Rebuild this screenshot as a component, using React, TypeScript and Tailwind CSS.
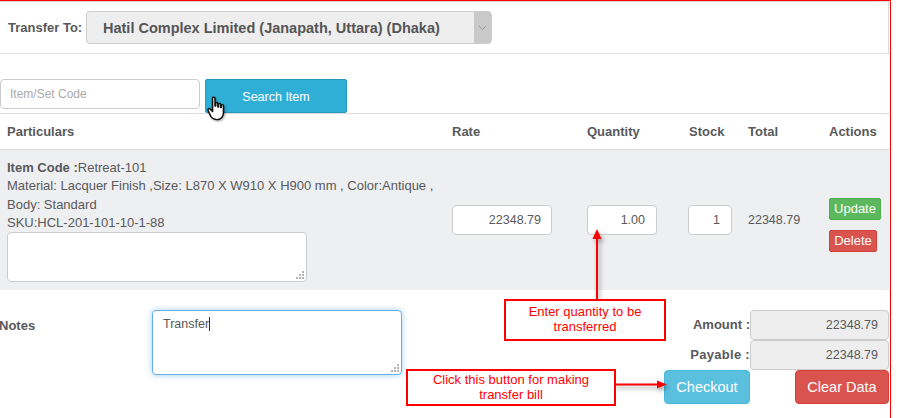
export default function App() {
  const font = { fontFamily: '"Liberation Sans", Arial, sans-serif' };
  return (
    <div style={font} className="relative w-[897px] h-[418px] overflow-hidden bg-white text-[12.5px] text-[#58595b]">
      <div className="w-[891px] h-[418px] border-t border-r border-[#ff0000]">
        <div className="w-[889px]">
          <div className="flex items-center h-[53px] border-t border-r border-b border-[#dddddd] pl-2">
            <span className="w-[78px] text-[13px] font-bold">Transfer To:</span>
            <div className="flex w-[406px] h-[33px] rounded border border-[#cccccc] bg-[#eeeeee] overflow-hidden">
              <span className="flex-1 pl-4 leading-[32px] text-[14.5px] font-bold text-[#555555]">Hatil Complex Limited (Janapath, Uttara) (Dhaka)</span>
              <span className="flex w-[17px] items-center justify-center bg-[#c9c9c9]">
                <svg width="9" height="6" viewBox="0 0 9 6" fill="none" stroke="#999999"><path d="M1 1l3.5 3.5L8 1" /></svg>
              </span>
            </div>
          </div>
          <div className="flex items-start gap-[5px] h-[60px] pt-[25px] border-b border-[#dddddd]">
            <div className="w-[200px] h-[30px] rounded border border-[#cccccc] bg-white pl-[9px] text-[12px] leading-[28px] text-[#aaaaaa]">Item/Set Code</div>
            <div className="w-[142px] h-[34px] rounded-[2px] border border-[#269abc] bg-[#2fafd6] text-center leading-[34px] text-white">Search Item</div>
          </div>
          <div className="flex h-[36px] items-center border-b border-[#dddddd] text-[13px] font-bold">
            <span className="w-[452px] pl-[7px]">Particulars</span>
            <span className="w-[135px]">Rate</span>
            <span className="w-[102px]">Quantity</span>
            <span className="w-[59px]">Stock</span>
            <span className="w-[81px]">Total</span>
            <span>Actions</span>
          </div>
          <div className="flex h-[140px] items-center bg-[#eeeff1]">
            <div className="w-[452px] pl-[7px] self-start pt-[9px] text-[13px] leading-[18.25px]">
              <div><b>Item Code :</b>Retreat-101</div>
              <div>Material: Lacquer Finish ,Size: L870 X W910 X H900 mm , Color:Antique ,</div>
              <div>Body: Standard</div>
              <div>SKU:HCL-201-101-10-1-88</div>
              <div className="relative w-[300px] h-[50px] rounded border border-[#cccccc] bg-white">
                <Grip />
              </div>
            </div>
            <div className="w-[135px]">
              <div className="w-[100px] h-[30px] rounded border border-[#cccccc] bg-white pr-[10px] text-right leading-[28px]">22348.79</div>
            </div>
            <div className="w-[101px]">
              <div className="w-[70px] h-[30px] rounded border border-[#cccccc] bg-white pr-[11px] text-right leading-[28px]">1.00</div>
            </div>
            <div className="w-[60px]">
              <div className="w-[44px] h-[30px] rounded border border-[#cccccc] bg-white pr-[11px] text-right leading-[28px]">1</div>
            </div>
            <div className="w-[81px]">22348.79</div>
            <div className="flex flex-col items-start gap-[10px] mt-[10px]">
              <div className="h-[22px] w-[52px] rounded-[2px] border border-[#4cae4c] bg-[#5cb85c] text-center text-[13px] leading-[20px] text-white">Update</div>
              <div className="h-[22px] w-[48px] rounded-[2px] border border-[#d43f3a] bg-[#d9534f] text-center text-[13px] leading-[20px] text-white">Delete</div>
            </div>
          </div>
          <div className="flex items-start pt-[20px]">
            <span className="w-[152px] mt-[6px] -ml-px text-[13px] font-bold">Notes</span>
            <div className="relative ml-px w-[250px] h-[65px] rounded border border-[#66afe9] bg-white pl-[10px] pt-[2px] leading-[22px] shadow-[0_0_6px_rgba(102,175,233,0.6)]">
              Transfer<span className="inline-block w-px h-[14px] align-[-3px] bg-[#333333]" />
              <Grip />
            </div>
            <div className="ml-auto w-[225px] flex flex-col">
              <div className="flex justify-end items-center">
                <span className="font-bold text-[13px]">Amount :</span>
                <div className="w-[139px] h-[30px] rounded border border-[#cccccc] bg-[#eeeeee] pr-[10px] text-right leading-[28px]">22348.79</div>
              </div>
              <div className="flex justify-end items-center">
                <span className="font-bold text-[13px] tracking-[0.3px]">Payable :</span>
                <div className="w-[139px] h-[30px] rounded border border-[#cccccc] bg-[#eeeeee] pr-[10px] text-right leading-[28px]">22348.79</div>
              </div>
              <div className="flex justify-between">
                <div className="w-[86px] h-[34px] rounded border border-[#46b8da] bg-[#5bc0de] text-center text-[14.5px] leading-[32px] text-white">Checkout</div>
                <div className="w-[94px] h-[34px] rounded border border-[#d43f3a] bg-[#d9534f] text-center text-[14.5px] leading-[32px] text-white">Clear Data</div>
              </div>
            </div>
          </div>
        </div>
      </div>

      <svg className="absolute left-[207px] top-[96px] drop-shadow-[1px_1px_1px_rgba(0,0,0,0.35)]" width="20" height="25" viewBox="0 0 18 25" preserveAspectRatio="none">
        <path d="M5 2.2c0-1.5 2.2-1.5 2.2 0V10h.6V7.5c0-1.3 2-1.3 2 0V11h.5V8.4c0-1.3 2-1.3 2 0V11.500h.5V9.600c0-1.300 2-1.300 2 0V17c0 3-1.800 6-4.500 6.500-3.200.6-5.300-.6-6.800-3L1 14.500c-.8-1.400 1-2.600 2-1.300L5 15.500z" fill="#ffffff" stroke="#111111" strokeWidth="1.400" strokeLinejoin="round" />
      </svg>

      <svg className="absolute left-0 top-0 pointer-events-none drop-shadow-[2px_3px_2px_rgba(0,0,0,0.35)]" width="897" height="418">
        <line x1="597" y1="238" x2="597" y2="300" stroke="#ff0000" strokeWidth="2" />
        <path d="M597 229l-4.500 10h9z" fill="#ff0000" />
        <line x1="614" y1="384.500" x2="658" y2="384.500" stroke="#ff0000" strokeWidth="2" />
        <path d="M667 384.500l-10-4v8z" fill="#ff0000" />
      </svg>

      <div className="absolute left-[504px] top-[299px] flex h-[42px] w-[162px] items-center justify-center border-2 border-[#ff0000] bg-white pb-[2px] text-center text-[13px] leading-[15px] text-[#ff0000]">
        <span>Enter quantity to be<br />transferred</span>
      </div>
      <div className="absolute left-[406px] top-[369px] flex h-[37px] w-[210px] items-center justify-center border-2 border-[#ff0000] bg-white pb-[2px] text-center text-[13px] leading-[15px] text-[#ff0000]">
        <span>Click this button for making<br />transfer bill</span>
      </div>
    </div>
  );
}

function Grip() {
  return (
    <svg className="absolute right-[2px] bottom-[2px]" width="8" height="8" viewBox="0 0 8 8" fill="#b5b5b5">
      <rect x="6" y="0" width="2" height="2" />
      <rect x="3" y="3" width="2" height="2" />
      <rect x="6" y="3" width="2" height="2" />
      <rect x="0" y="6" width="2" height="2" />
      <rect x="3" y="6" width="2" height="2" />
      <rect x="6" y="6" width="2" height="2" />
    </svg>
  );
}
